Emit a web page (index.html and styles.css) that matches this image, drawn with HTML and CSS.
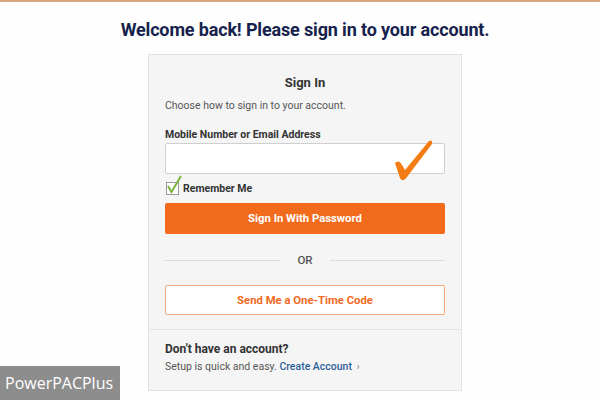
FILE: index.html
```html
<!DOCTYPE html>
<html>
<head>
<meta charset="utf-8">
<link rel="stylesheet" href="styles.css">
</head>
<body>
<div class="topbar"></div>
<h1 class="title">Welcome back! Please sign in to your account.</h1>
<div class="card">
  <div class="card-main">
    <h2 class="card-title">Sign In</h2>
    <p class="intro">Choose how to sign in to your account.</p>
    <label class="label">Mobile Number or Email Address</label>
    <div class="input-wrap">
      <div class="input"></div>
      <svg class="big-check" width="48" height="48" viewBox="0 0 48 48"><path d="M6 27 Q10 23 13 29 L16 34 L40 5 Q44 3 43 8 L18 41 Q14 47 11 42 Z" fill="#f57c13"/></svg>
    </div>
    <div class="remember">
      <span class="box"><svg class="small-check" width="16" height="20" viewBox="0 0 16 20"><path d="M2 11 L5.5 17 L15 1" fill="none" stroke="#7cb342" stroke-width="2"/></svg></span>
      <span class="remember-text">Remember Me</span>
    </div>
    <div class="btn-primary">Sign In With Password</div>
    <div class="divider"><span class="line"></span><span class="or">OR</span><span class="line"></span></div>
    <div class="btn-outline">Send Me a One-Time Code</div>
  </div>
  <div class="card-foot">
    <div class="foot-title">Don't have an account?</div>
    <div class="foot-text">Setup is quick and easy. <span class="link">Create Account</span> <span class="chev">›</span></div>
  </div>
</div>
<div class="watermark">PowerPACPlus</div>
</body>
</html>
```
FILE: styles.css
```css
* { box-sizing: border-box; }
html, body { margin: 0; padding: 0; }
body {
  width: 600px;
  height: 400px;
  overflow: hidden;
  background: #fdfefd;
  font-family: Roboto, "Liberation Sans", sans-serif;
  position: relative;
}
.topbar { height: 2px; background: #d4a57f; }
.title {
  margin: 17px 0 0;
  padding-left: 10px;
  text-align: center;
  font-size: 18px;
  font-weight: 700;
  color: #16224d;
  line-height: 22px;
  letter-spacing: -0.15px;
}
.card {
  width: 314px;
  margin: 13px 0 0 148px;
  background: #f5f5f5;
  border: 1px solid #e2e2e2;
}
.card-main { padding: 18px 16px 14px; }
.card-title {
  margin: 0;
  text-align: center;
  font-size: 13px;
  font-weight: 700;
  color: #333;
  line-height: 20px;
}
.intro {
  margin: 5px 0 0;
  font-size: 10.5px;
  color: #555;
  line-height: 16px;
}
.label {
  display: block;
  margin-top: 14px;
  font-size: 10.5px;
  font-weight: 700;
  color: #333;
  line-height: 14px;
}
.input-wrap { position: relative; margin-top: 1px; }
.input {
  height: 31px;
  background: #fff;
  border: 1px solid #cfcfcf;
  border-radius: 2px;
}
.big-check { position: absolute; left: 224px; top: -7px; }
.remember {
  display: flex;
  align-items: center;
  margin-top: 7px;
  height: 15px;
}
.box {
  position: relative;
  width: 13px;
  height: 13px;
  background: #fff;
  border: 1px solid #9a9a9a;
  margin-left: 1px;
}
.small-check { position: absolute; left: -1px; top: -8px; }
.remember-text {
  margin-left: 4px;
  font-size: 10.5px;
  font-weight: 700;
  color: #333;
}
.btn-primary {
  margin-top: 7px;
  height: 31px;
  background: #f26b1d;
  border-radius: 2px;
  color: #fff;
  font-size: 11.3px;
  font-weight: 700;
  display: flex;
  align-items: center;
  justify-content: center;
}
.divider {
  display: flex;
  align-items: center;
  gap: 17px;
  margin-top: 16px;
  height: 20px;
}
.line { flex: 1; height: 1px; background: #dcdcdc; }
.or { font-size: 11.5px; color: #555; font-weight: 500; }
.btn-outline {
  margin-top: 15px;
  height: 30px;
  background: #fff;
  border: 1px solid #f0a878;
  border-radius: 2px;
  color: #f06a1f;
  font-size: 11.3px;
  font-weight: 700;
  display: flex;
  align-items: center;
  justify-content: center;
}
.card-foot {
  border-top: 1px solid #e4e4e4;
  padding: 10px 16px 15px;
}
.foot-title {
  font-size: 12px;
  font-weight: 700;
  color: #333;
  line-height: 18px;
}
.foot-text {
  margin-top: 1px;
  font-size: 10.5px;
  color: #555;
  line-height: 16px;
}
.link { color: #2e5f9a; font-weight: 500; }
.chev { color: #888; margin-left: 2px; }
.watermark {
  position: absolute;
  left: 0;
  bottom: 0;
  width: 120px;
  height: 34px;
  background: #8d8d8d;
  color: #fff;
  font-family: "Open Sans", sans-serif;
  font-size: 16px;
  line-height: 34px;
  padding-left: 5px;
}
```
